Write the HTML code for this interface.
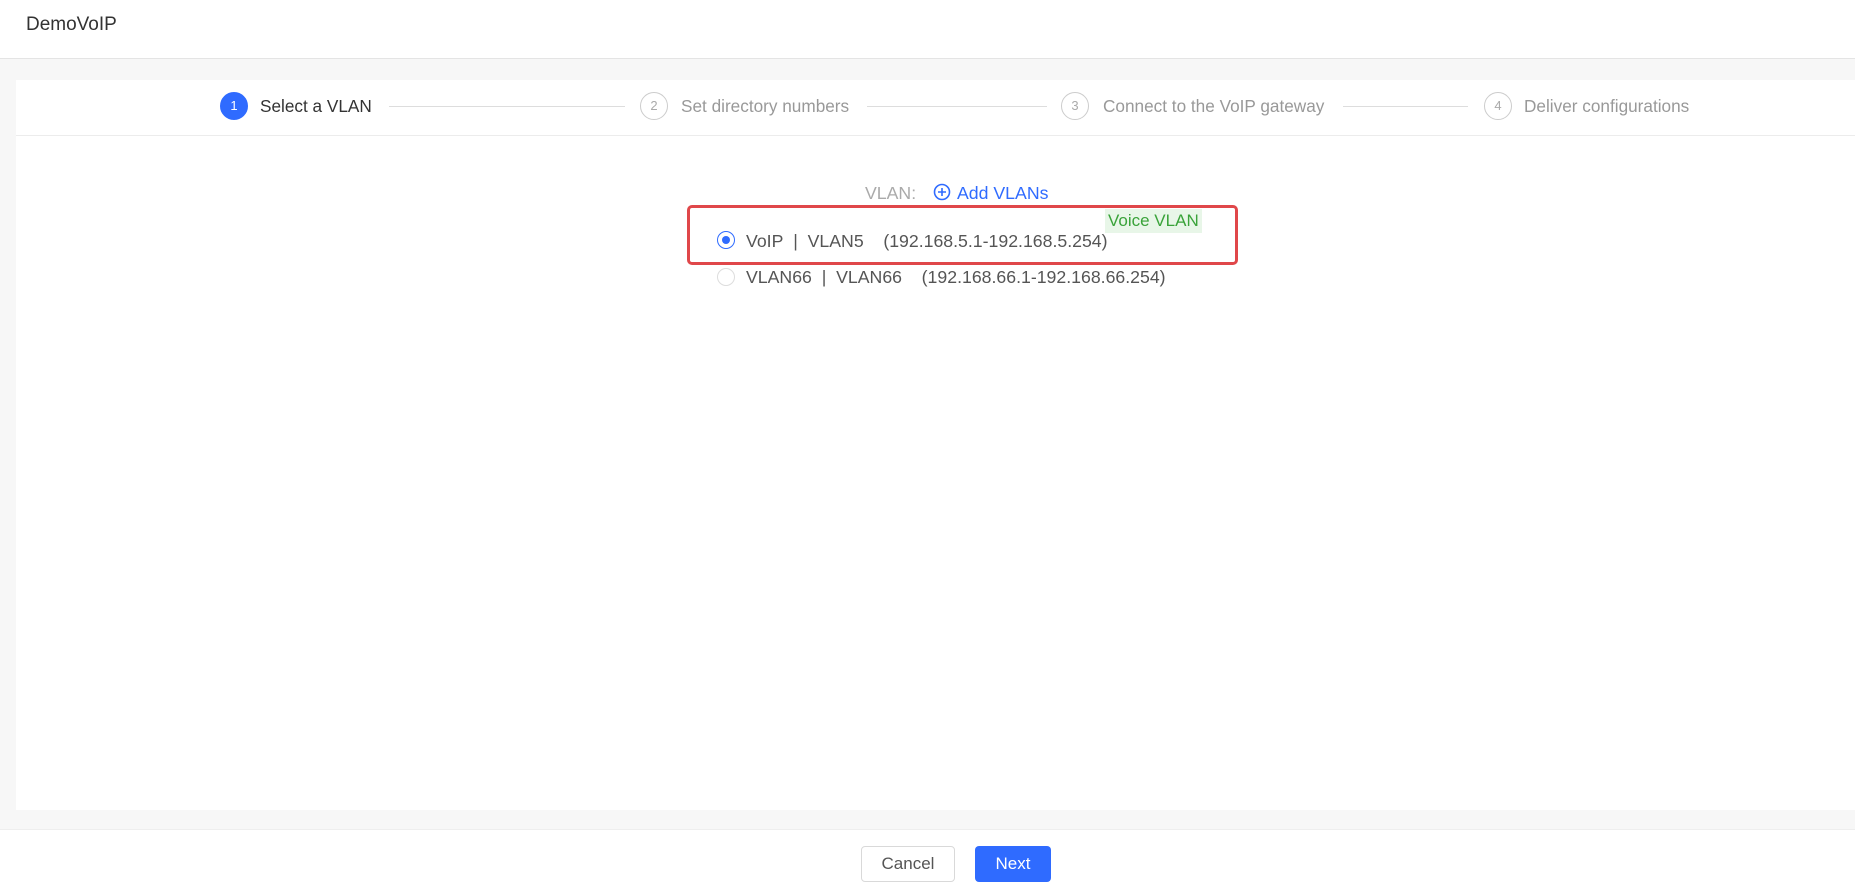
<!DOCTYPE html>
<html><head><meta charset="utf-8"><style>
*{margin:0;padding:0;box-sizing:border-box}
body{width:1855px;height:891px;background:#f7f7f7;font-family:"Liberation Sans",Arial,sans-serif;position:relative;overflow:hidden;color:#333}
.a{position:absolute;white-space:nowrap}
#hdr{left:0;top:0;width:1855px;height:59px;background:#fff;border-bottom:1px solid #e4e4e4}
#card{left:16px;top:80px;width:1839px;height:730px;background:#fff}
#sep{left:16px;top:135px;width:1839px;height:1px;background:#ececec}
.c{width:28px;height:28px;border-radius:50%;border:1px solid #ccc;color:#aaa;font-size:13px;line-height:26px;text-align:center;top:92px}
.c.on{background:#2f6bff;border-color:#2f6bff;color:#fff}
.t{font-size:17.2px;top:96px;color:#999;line-height:20px}
.l{height:1px;background:#ddd;top:106px}
#foot{left:0;top:829px;width:1855px;height:62px;background:#fff;border-top:1px solid #eee}
.btn{top:846px;height:36px;border-radius:4px;font-size:17px;line-height:36px;text-align:center}
.txt{font-size:17.7px;color:#555;line-height:20px}
</style></head><body>
<div class="a" id="hdr"></div>
<div class="a" style="left:26px;top:14px;font-size:19px;color:#333">DemoVoIP</div>
<div class="a" id="card"></div>
<div class="a" id="sep"></div>

<div class="a c on" style="left:220px">1</div>
<div class="a t" style="left:260px;color:#333">Select a VLAN</div>
<div class="a l" style="left:389px;width:236px"></div>
<div class="a c" style="left:640px">2</div>
<div class="a t" style="left:681px">Set directory numbers</div>
<div class="a l" style="left:867px;width:180px"></div>
<div class="a c" style="left:1061px">3</div>
<div class="a t" style="left:1103px">Connect to the VoIP gateway</div>
<div class="a l" style="left:1343px;width:125px"></div>
<div class="a c" style="left:1484px">4</div>
<div class="a t" style="left:1524px">Deliver configurations</div>

<div class="a txt" style="left:865px;top:183px;color:#aaa">VLAN:</div>
<svg class="a" style="left:933px;top:183px" width="18" height="18" viewBox="0 0 18 18"><circle cx="9" cy="9" r="7.5" fill="none" stroke="#2f6bff" stroke-width="1.6"/><path d="M9 5v8M5 9h8" stroke="#2f6bff" stroke-width="1.6"/></svg>
<div class="a txt" style="left:957px;top:183px;color:#2f6bff">Add VLANs</div>

<div class="a" style="left:687px;top:205px;width:551px;height:60px;border:3px solid #e0474a;border-radius:5px"></div>
<div class="a" style="left:1105px;top:209px;width:97px;height:24px;background:#e8f6e8"></div>
<div class="a" style="left:1108px;top:211px;font-size:17px;color:#3aa33a">Voice VLAN</div>
<div class="a" style="left:717px;top:231px;width:18px;height:18px;border-radius:50%;border:1px solid #2f6bff;background:#fff"><div style="margin:4px;width:8px;height:8px;border-radius:50%;background:#2f6bff"></div></div>
<div class="a txt" style="left:746px;top:231px">VoIP&nbsp; |&nbsp; VLAN5&nbsp;&nbsp;&nbsp; (192.168.5.1-192.168.5.254)</div>
<div class="a" style="left:717px;top:268px;width:18px;height:18px;border-radius:50%;border:1px solid #ddd;background:#fff"></div>
<div class="a txt" style="left:746px;top:267px">VLAN66&nbsp; |&nbsp; VLAN66&nbsp;&nbsp;&nbsp; (192.168.66.1-192.168.66.254)</div>

<div class="a" id="foot"></div>
<div class="a btn" style="left:861px;width:94px;border:1px solid #d9d9d9;color:#555;background:#fff;line-height:34px">Cancel</div>
<div class="a btn" style="left:975px;width:76px;background:#2f6bff;color:#fff">Next</div>
</body></html>
